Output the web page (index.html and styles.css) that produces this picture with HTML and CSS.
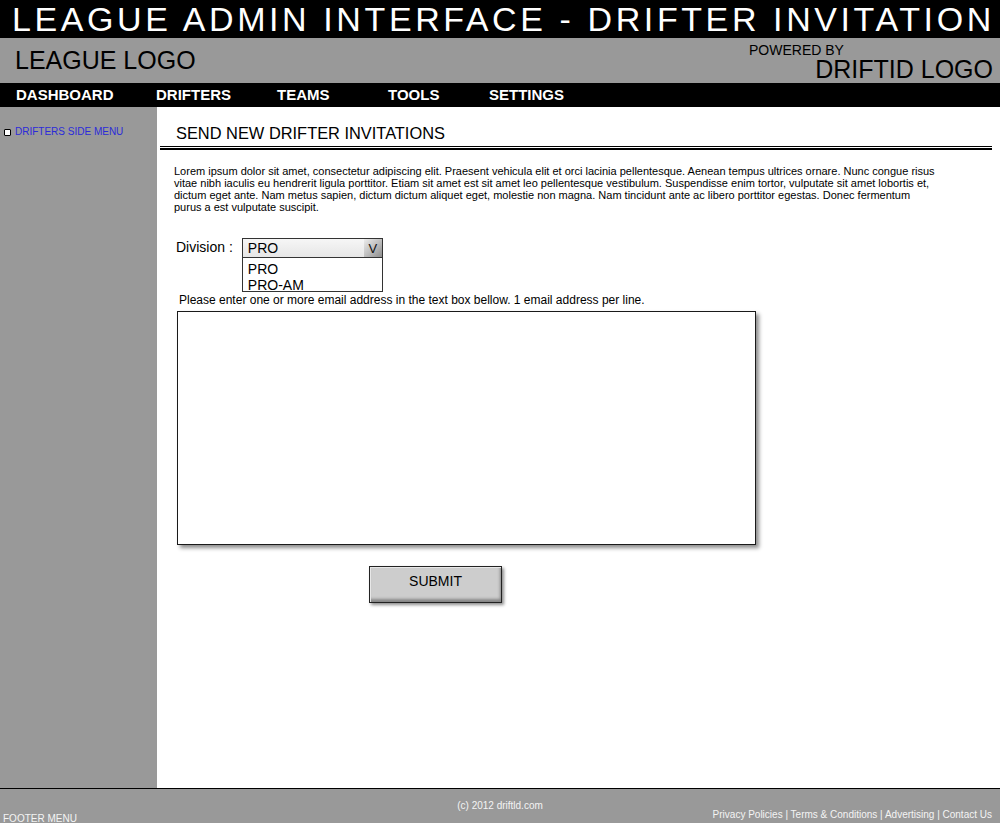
FILE: index.html
```html
<!DOCTYPE html>
<html lang="en">
<head>
<meta charset="utf-8">
<title>League Admin Interface - Drifter Invitation</title>
<link rel="stylesheet" href="styles.css">
</head>
<body>
<div class="page">
  <header class="titlebar">
    <h1 class="title">LEAGUE ADMIN INTERFACE - DRIFTER INVITATION</h1>
  </header>
  <div class="brandbar">
    <div class="league-logo">LEAGUE LOGO</div>
    <div class="powered">
      <span class="powered-by">POWERED BY</span>
      <span class="driftid-logo">DRIFTID LOGO</span>
    </div>
  </div>
  <nav class="mainnav">
    <a class="nav-item" href="#">DASHBOARD</a>
    <a class="nav-item" href="#">DRIFTERS</a>
    <a class="nav-item" href="#">TEAMS</a>
    <a class="nav-item" href="#">TOOLS</a>
    <a class="nav-item" href="#">SETTINGS</a>
  </nav>
  <div class="layout">
    <aside class="sidebar">
      <div class="side-item">
        <span class="side-box"></span>
        <a class="side-link" href="#">DRIFTERS SIDE MENU</a>
      </div>
    </aside>
    <main class="content">
      <h2 class="section-title">SEND NEW DRIFTER INVITATIONS</h2>
      <div class="section-rule"></div>
      <p class="intro">Lorem ipsum dolor sit amet, consectetur adipiscing elit. Praesent vehicula elit et orci lacinia pellentesque. Aenean tempus ultrices ornare. Nunc congue risus vitae nibh iaculis eu hendrerit ligula porttitor. Etiam sit amet est sit amet leo pellentesque vestibulum. Suspendisse enim tortor, vulputate sit amet lobortis et, dictum eget ante. Nam metus sapien, dictum dictum aliquet eget, molestie non magna. Nam tincidunt ante ac libero porttitor egestas. Donec fermentum purus a est vulputate suscipit.</p>
      <div class="division-row">
        <span class="division-label">Division :</span>
        <div class="dropdown">
          <div class="dropdown-field">
            <span class="dropdown-value">PRO</span>
            <span class="dropdown-btn">V</span>
          </div>
          <ul class="dropdown-list">
            <li>PRO</li>
            <li>PRO-AM</li>
          </ul>
        </div>
      </div>
      <p class="instructions">Please enter one or more email address in the text box bellow. 1 email address per line.</p>
      <textarea class="email-box" aria-label="Email addresses"></textarea>
      <button class="submit" type="button">SUBMIT</button>
    </main>
  </div>
  <footer class="footer">
    <div class="footer-menu">FOOTER MENU</div>
    <div class="footer-copy">(c) 2012 driftld.com</div>
    <div class="footer-links">Privacy Policies | Terms &amp; Conditions | Advertising | Contact Us</div>
  </footer>
</div>
</body>
</html>
```

FILE: styles.css
```css
* {
  box-sizing: border-box;
}

html,
body {
  margin: 0;
  padding: 0;
}

body {
  font-family: "Liberation Sans", Arial, sans-serif;
  background: #fff;
  color: #000;
}

.page {
  display: flex;
  flex-direction: column;
  width: 1000px;
  height: 823px;
  overflow: hidden;
}

/* Title bar */
.titlebar {
  flex: none;
  height: 38px;
  background: #000;
  padding: 1px 0 0 12px;
  overflow: hidden;
}

.title {
  margin: 0;
  font-weight: normal;
  font-size: 34px;
  line-height: 37px;
  letter-spacing: 3.6px;
  color: #fff;
  white-space: nowrap;
}

/* Brand bar */
.brandbar {
  flex: none;
  height: 45px;
  background: #999;
  display: flex;
  justify-content: space-between;
}

.league-logo {
  font-size: 25px;
  line-height: 25px;
  padding: 10px 0 0 15px;
}

.powered {
  width: 244px;
  margin-right: 7px;
  padding-top: 5px;
  display: flex;
  flex-direction: column;
}

.powered-by {
  font-size: 14px;
  line-height: 14px;
}

.driftid-logo {
  align-self: flex-end;
  font-size: 25px;
  line-height: 25px;
}

/* Main nav */
.mainnav {
  flex: none;
  height: 24px;
  background: #000;
  display: grid;
  grid-template-columns: 140px 121px 111px 101px auto;
  padding-left: 16px;
}

.nav-item {
  color: #fff;
  font-weight: bold;
  font-size: 15px;
  line-height: 24px;
  text-decoration: none;
}

/* Body layout */
.layout {
  flex: 1;
  min-height: 0;
  display: flex;
}

.sidebar {
  flex: none;
  width: 157px;
  background: #999;
  padding: 19px 0 0 4px;
}

.side-item {
  display: flex;
  align-items: center;
  gap: 4px;
  font-size: 10px;
  line-height: 12px;
}

.side-box {
  width: 7px;
  height: 7px;
  border: 1px solid #000;
  border-radius: 1px;
  background: #fff;
}

.side-link {
  color: #2b2bd9;
  text-decoration: none;
}

.content {
  flex: 1;
  padding-top: 16px;
}

.section-title {
  margin: 0 0 0 19px;
  font-weight: normal;
  font-size: 16.4px;
  line-height: 20px;
}

.section-rule {
  margin: 3px 8px 0 3px;
  height: 4px;
  border-top: 1px solid #000;
  border-bottom: 2px solid #000;
}

.intro {
  margin: 15px 0 0 17px;
  width: 764px;
  font-size: 11px;
  line-height: 12px;
}

.division-row {
  display: flex;
  align-items: flex-start;
  gap: 9px;
  margin: 25px 0 0 19px;
}

.division-label {
  font-size: 14px;
  line-height: 16px;
  padding-top: 1px;
}

.dropdown {
  width: 141px;
}

.dropdown-field {
  height: 20px;
  border: 1px solid #333;
  background: linear-gradient(#f6f6f6, #e6e6e6);
  display: flex;
  justify-content: space-between;
  padding-left: 5px;
}

.dropdown-value {
  font-size: 14px;
  line-height: 18px;
}

.dropdown-btn {
  width: 18px;
  height: 18px;
  background: linear-gradient(135deg, #ececec 0%, #c4c4c4 45%, #8e8e8e 100%);
  font-size: 13px;
  line-height: 19px;
  text-align: center;
  color: #111;
}

.dropdown-list {
  margin: 0;
  height: 34px;
  padding: 3px 0 0 5px;
  list-style: none;
  border: 1px solid #333;
  border-top: none;
  background: #fff;
  font-size: 14px;
  line-height: 16px;
  overflow: hidden;
}

.instructions {
  margin: 2px 0 0 22px;
  font-size: 12px;
  line-height: 13px;
}

.email-box {
  display: block;
  margin: 4px 0 0 20px;
  width: 579px;
  height: 234px;
  border: 1px solid #1a1a1a;
  background: #fff;
  box-shadow: 3px 3px 4px rgba(0, 0, 0, 0.45);
  resize: none;
  outline: none;
  font-family: "Liberation Sans", Arial, sans-serif;
}

.submit {
  display: block;
  margin: 21px 0 0 212px;
  width: 133px;
  padding: 6px 0 13px;
  border: 1px solid #222;
  background: #cdcdcd;
  box-shadow: inset 1px 1px 0 #e8e8e8, inset -1px -3px 3px rgba(0, 0, 0, 0.35), 2px 2px 3px rgba(0, 0, 0, 0.45);
  font-family: "Liberation Sans", Arial, sans-serif;
  font-size: 14px;
  line-height: 16px;
  color: #000;
}

/* Footer */
.footer {
  flex: none;
  height: 35px;
  background: #999;
  border-top: 1px solid #000;
  display: grid;
  grid-template-columns: 1fr auto 1fr;
  color: #f4f4f4;
  font-size: 10px;
  line-height: 11px;
  white-space: nowrap;
}

.footer-menu {
  padding: 24px 0 0 3px;
}

.footer-copy {
  padding-top: 11px;
}

.footer-links {
  padding: 20px 8px 0 0;
  text-align: right;
}
```
